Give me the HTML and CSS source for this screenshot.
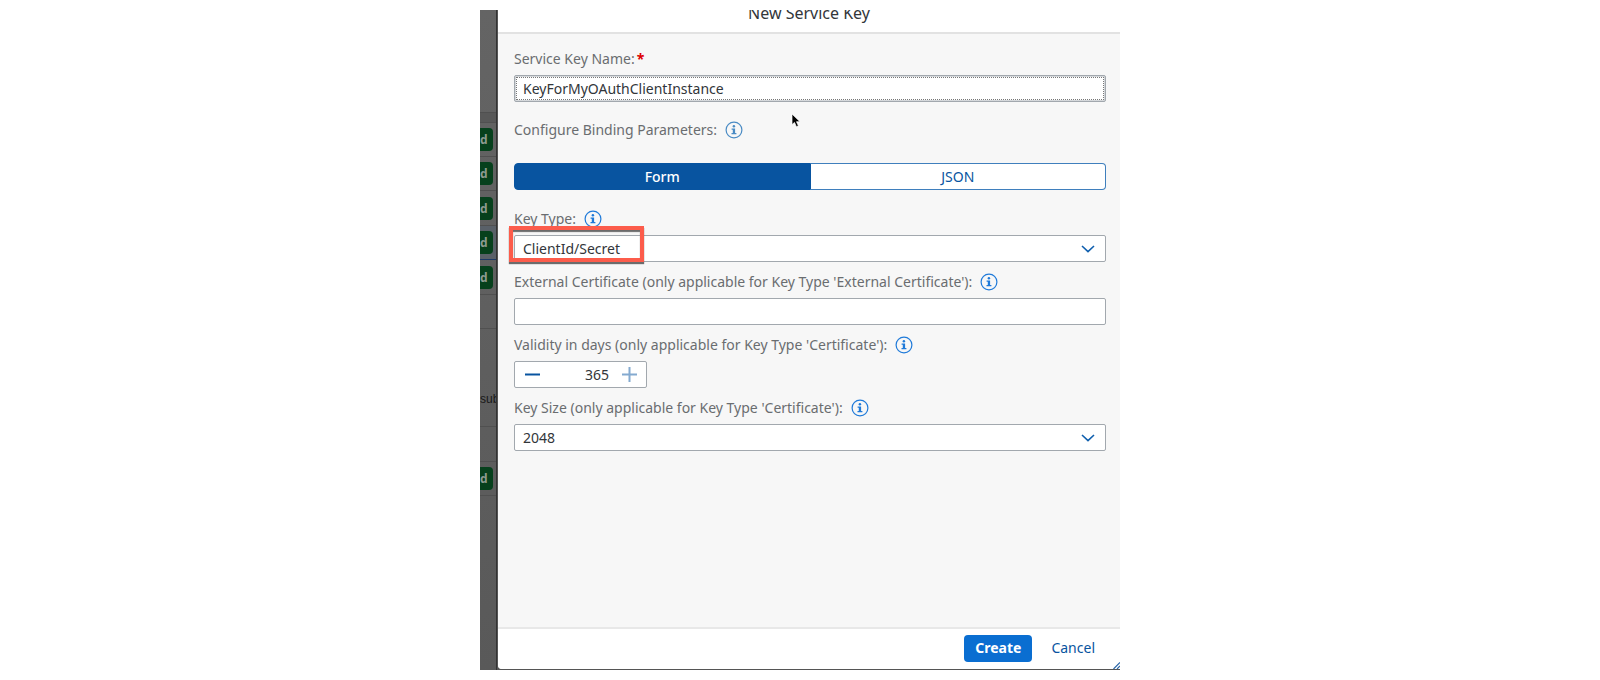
FILE: index.html
```
<!DOCTYPE html>
<html lang="en">
<head>
<meta charset="utf-8">
<title>New Service Key</title>
<link rel="stylesheet" href="styles.css">
</head>
<body>
<svg class="defs" aria-hidden="true">
  <symbol id="info" viewBox="0 0 18 18">
    <circle cx="9" cy="9" r="7.9" fill="none" stroke="currentColor" stroke-width="1.2"/>
    <circle cx="8.9" cy="5.3" r="1.25" fill="currentColor"/>
    <path d="M6.6 7.4h3.5v4.6h1.3v1.3H6.5V12h1.3V8.7H6.6z" fill="currentColor"/>
  </symbol>
  <symbol id="chevron" viewBox="0 0 14 8">
    <path d="M1 1l6 5.6L13 1" fill="none" stroke="currentColor" stroke-width="1.6"/>
  </symbol>
</svg>
<main class="window">
  <aside class="backdrop">
    <div class="row top"></div>
    <div class="row head"></div>
    <div class="row"><span class="badge">d</span></div>
    <div class="row"><span class="badge">d</span></div>
    <div class="row loose"><span class="badge">d</span></div>
    <div class="row selected"><span class="badge">d</span></div>
    <div class="row loose"><span class="badge">d</span></div>
    <div class="row"></div>
    <div class="row tall">sub</div>
    <div class="row loose"></div>
    <div class="row"><span class="badge">d</span></div>
  </aside>
  <section class="dialog">
    <header class="title-bar"><h1>New Service Key</h1></header>
    <form class="content">
      <div class="label-row"><label for="name">Service Key Name:<span class="required">*</span></label></div>
      <div class="focus-field"><input id="name" class="field-inner" type="text" value="KeyForMyOAuthClientInstance"></div>
      <div class="label-row binding"><span>Configure Binding Parameters:</span><svg class="info muted"><use href="#info"/></svg></div>
      <div class="segmented">
        <button type="button" class="segment active">Form</button>
        <button type="button" class="segment">JSON</button>
      </div>
      <div class="label-row type"><label for="type">Key Type:</label><svg class="info"><use href="#info"/></svg></div>
      <div class="select-wrap">
        <select id="type" class="field"><option>ClientId/Secret</option></select>
        <svg class="chevron"><use href="#chevron"/></svg>
        <div class="highlight"></div>
      </div>
      <div class="label-row"><label for="cert">External Certificate (only applicable for Key Type 'External Certificate'):</label><svg class="info"><use href="#info"/></svg></div>
      <input id="cert" class="field" type="text">
      <div class="label-row"><label for="days">Validity in days (only applicable for Key Type 'Certificate'):</label><svg class="info"><use href="#info"/></svg></div>
      <div class="stepper">
        <button type="button" class="step" aria-label="Decrease"><svg viewBox="0 0 15 15"><path d="M0 7.5h15" stroke="currentColor" stroke-width="2"/></svg></button>
        <input id="days" type="text" value="365">
        <button type="button" class="step plus" aria-label="Increase"><svg viewBox="0 0 15 15"><path d="M0 7.5h15M7.5 0v15" stroke="currentColor" stroke-width="2"/></svg></button>
      </div>
      <div class="label-row"><label for="size">Key Size (only applicable for Key Type 'Certificate'):</label><svg class="info"><use href="#info"/></svg></div>
      <div class="select-wrap">
        <select id="size" class="field"><option>2048</option></select>
        <svg class="chevron"><use href="#chevron"/></svg>
      </div>
    </form>
    <footer class="actions">
      <button type="button" class="create">Create</button>
      <button type="button" class="cancel">Cancel</button>
      <svg class="grip" viewBox="0 0 7 7"><path d="M0.5 7L7 0.5M4 7L7 4" stroke="currentColor" stroke-width="1.2"/></svg>
    </footer>
    <svg class="cursor" viewBox="0 0 10 15"><path d="M1 1v10.6l2.5-2.2 1.9 4.3 2-.9-1.9-4.1H9z" fill="#000" stroke="#fff" stroke-width=".7"/></svg>
  </section>
</main>
</body>
</html>
```
FILE: styles.css
```
* { box-sizing: border-box; }
body {
  margin: 0;
  padding: 10px;
  background: #fff;
  color: #32363a;
  font: 14px/20px "Noto Sans", "Liberation Sans", sans-serif;
}
button, input, select { font: inherit; color: inherit; margin: 0; }
.defs { position: absolute; width: 0; height: 0; }
.window {
  display: flex;
  width: 100%;
  max-width: 640px;
  min-height: calc(100vh - 20px);
  margin: 0 auto;
  background: #555;
  overflow: hidden;
}
.backdrop {
  flex: none;
  width: 17px;
  overflow: hidden;
  background: linear-gradient(#646464, #595959);
  border-right: 1px solid #333;
  color: #181818;
}
.row {
  display: flex;
  align-items: center;
  height: 34px;
  border-bottom: 1px solid #505050;
}
.row.top { height: 103px; }
.row.head { height: 10px; background: #585858; }
.row.loose { height: 35px; }
.row.tall { height: 98px; padding-top: 42px; font-size: 12px; font-family: "Liberation Sans", Arial, sans-serif; }
.row.selected { background: #596068; border-bottom-color: #1d3a66; }
.badge {
  width: 13px;
  height: 23px;
  border-radius: 0 4px 4px 0;
  background: #06401c;
  color: #8c9a90;
  font-size: 12px;
  font-weight: 700;
  line-height: 23px;
}
.dialog {
  position: relative;
  display: flex;
  flex: 1;
  min-width: 0;
  flex-direction: column;
  margin: 0 0 1px 1px;
  background: #f7f7f7;
  border-radius: 0 0 0 4px;
}
.title-bar {
  display: flex;
  justify-content: center;
  align-items: flex-end;
  height: 22px;
  overflow: hidden;
  background: #fff;
  flex: none;
}
.title-bar h1 { margin: 0; font-size: 16px; font-weight: 400; line-height: 38px; }
.content {
  flex: 1;
  display: flex;
  flex-direction: column;
  padding: 5px 14px 16px 16px;
  border-top: 2px solid #e2e2e2;
}
.label-row {
  display: flex;
  align-items: center;
  gap: 8px;
  height: 36px;
  padding-top: 4px;
  color: #6a6d70;
  white-space: nowrap;
}
.label-row.binding { height: 61px; padding: 0 0 5px; }
.label-row.type { height: 45px; padding-top: 12px; }
.required { margin-left: 2px; color: #d00; font-weight: 700; }
.info { flex: none; width: 18px; height: 18px; color: #1f7ad9; }
.info.muted { color: #4a8bc4; }
.field {
  display: block;
  width: 100%;
  height: 27px;
  padding: 0 8px;
  border: 1px solid #a2a8ae;
  border-radius: 2px;
  background: #fff;
  appearance: none;
  outline: 0;
}
.focus-field {
  height: 27px;
  padding: 1px;
  border: 1px solid #a2a8ae;
  border-radius: 2px;
  background: #d5d8db;
}
.field-inner {
  display: block;
  width: 100%;
  height: 100%;
  padding: 0 6px;
  border: 1px dotted #777;
  background: #fff;
  outline: 0;
}
.segmented { display: flex; height: 27px; }
.segment {
  flex: 1;
  padding: 0;
  border: 1px solid #3f7fbd;
  border-left: 0;
  border-radius: 0 4px 4px 0;
  background: #fff;
  color: #0854a0;
}
.segment.active {
  border: 1px solid #0854a0;
  border-radius: 4px 0 0 4px;
  background: #0854a0;
  color: #fff;
  font-weight: 500;
}
.select-wrap { position: relative; }
.chevron {
  position: absolute;
  top: 10px;
  right: 11px;
  width: 14px;
  height: 8px;
  color: #0f5fae;
  pointer-events: none;
}
.highlight {
  position: absolute;
  top: -9px;
  left: -5px;
  width: 135px;
  height: 36px;
  border: 4px solid #fc5c4b;
  box-shadow: 0 2px 1px #6b6b6b, inset 0 2px 1px #6b6b6b;
  pointer-events: none;
}
.stepper {
  display: flex;
  align-items: center;
  width: 133px;
  height: 27px;
  border: 1px solid #a2a8ae;
  border-radius: 2px;
  background: #fff;
}
.stepper input {
  flex: 1;
  min-width: 0;
  padding: 0 3px 0 0;
  border: 0;
  background: none;
  text-align: right;
  outline: 0;
}
.step {
  display: flex;
  align-items: center;
  justify-content: center;
  width: 34px;
  height: 25px;
  padding: 0;
  border: 0;
  background: none;
  color: #0854a0;
}
.step svg { width: 15px; height: 15px; }
.plus { color: #84aad0; }
.actions {
  position: relative;
  display: flex;
  flex: none;
  align-items: center;
  justify-content: flex-end;
  gap: 8px;
  height: 42px;
  padding: 0 14px 2px 0;
  border-top: 2px solid #e8e8e8;
  border-radius: 0 0 0 4px;
  background: #fff;
}
.actions button { height: 27px; border: 0; border-radius: 4px; padding: 0 11px; }
.actions .create { background: #0a6ed1; color: #fff; font-weight: 700; }
.actions .cancel { background: none; color: #0854a0; }
.grip { position: absolute; right: 0; bottom: 0; width: 7px; height: 7px; color: #2a66a8; }
.cursor { position: absolute; left: 293px; top: 103px; width: 10px; height: 15px; }
```
